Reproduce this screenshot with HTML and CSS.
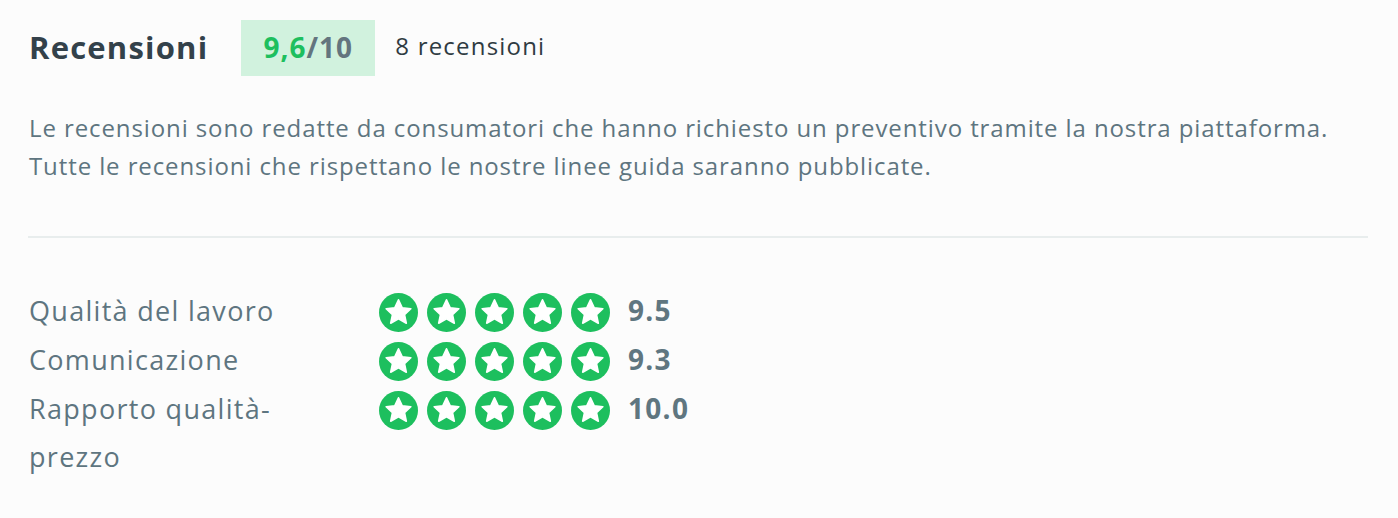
FILE: index.html
```html
<!DOCTYPE html>
<html lang="it">
<head>
<meta charset="utf-8">
<title>Recensioni</title>
<link rel="stylesheet" href="styles.css">
</head>
<body>

<div id="reviews">
	<div class="rv_head">
		<h2>Recensioni</h2>
		<div class="rv_score"><span class="rv_good">9,6</span>/10</div>
		<div class="rv_count">8 recensioni</div>
	</div>

	<p class="rv_intro">Le recensioni sono redatte da consumatori che hanno richiesto un preventivo tramite la nostra piattaforma.<br>
	Tutte le recensioni che rispettano le nostre linee guida saranno pubblicate.</p>

	<div class="rv_line"></div>

	<ul class="rv_list">
		<li>
			<span class="rv_label">Qualità del lavoro</span>
			<span class="rv_stars"><i></i><i></i><i></i><i></i><i></i></span>
			<span class="rv_num">9.5</span>
		</li>
		<li>
			<span class="rv_label">Comunicazione</span>
			<span class="rv_stars"><i></i><i></i><i></i><i></i><i></i></span>
			<span class="rv_num">9.3</span>
		</li>
		<li>
			<span class="rv_label">Rapporto qualità-prezzo</span>
			<span class="rv_stars"><i></i><i></i><i></i><i></i><i></i></span>
			<span class="rv_num">10.0</span>
		</li>
	</ul>
</div>

</body>
</html>
```

FILE: styles.css
```css
/* Reset style */
* {
	margin:0;
	padding:0;
}
body {
	background:#FCFCFC;
	color:#5E7580;
	font:24px/38px "Open Sans", Helvetica, Arial, sans-serif;
	letter-spacing:0.9px;
}
ul, li {
	list-style:none;
}
i {
	font-style:normal;
}

/* Reviews */
#reviews {
	padding:20px 30px 0 28px;
}
.rv_head {
	display:flex;
	align-items:center;
}
.rv_head h2 {
	color:#33414A;
	font-size:31px;
	font-weight:700;
	letter-spacing:1.2px;
	line-height:56px;
	margin-top:-2px;
	padding-left:1px;
	margin-right:33px;
}
.rv_score {
	width:134px;
	height:56px;
	background:#D1F2DE;
	color:#63757E;
	font-size:28px;
	font-weight:700;
	letter-spacing:1px;
	line-height:54px;
	text-align:center;
}
.rv_good {
	color:#1DBF5E;
}
.rv_count {
	margin-left:20px;
	color:#2F3B42;
	font-size:24px;
	letter-spacing:1.2px;
	margin-top:-4px;
}
.rv_intro {
	margin-top:33px;
	padding-left:1px;
}
.rv_line {
	height:2px;
	background:#E8EDED;
	margin-top:51px;
}
.rv_list {
	padding-top:49px;
}
.rv_list li {
	display:flex;
	align-items:flex-start;
}
.rv_label {
	width:300px;
	padding-left:1px;
	margin-right:50px;
	font-size:27px;
	letter-spacing:1.3px;
	line-height:48px;
}
.rv_stars {
	display:flex;
	align-items:center;
	gap:9px;
	height:48px;
	padding-top:1px;
}
.rv_stars i {
	display:block;
	width:39px;
	height:39px;
	border-radius:50%;
	background:#1DBF5E url("data:image/svg+xml,%3Csvg xmlns='http://www.w3.org/2000/svg' viewBox='0 0 24 24'%3E%3Cpath fill='%23fff' stroke='%23fff' stroke-width='1' stroke-linejoin='round' d='M12 4.2l2.3 4.9 5.3.6-3.9 3.6 1.1 5.3L12 15.9l-4.8 2.7 1.1-5.3-3.9-3.6 5.3-.6z'/%3E%3C/svg%3E") no-repeat center;
	background-size:39px 39px;
}
.rv_num {
	margin-left:18px;
	color:#5F7680;
	font-size:28px;
	font-weight:700;
	letter-spacing:1.3px;
	line-height:46px;
}
```
